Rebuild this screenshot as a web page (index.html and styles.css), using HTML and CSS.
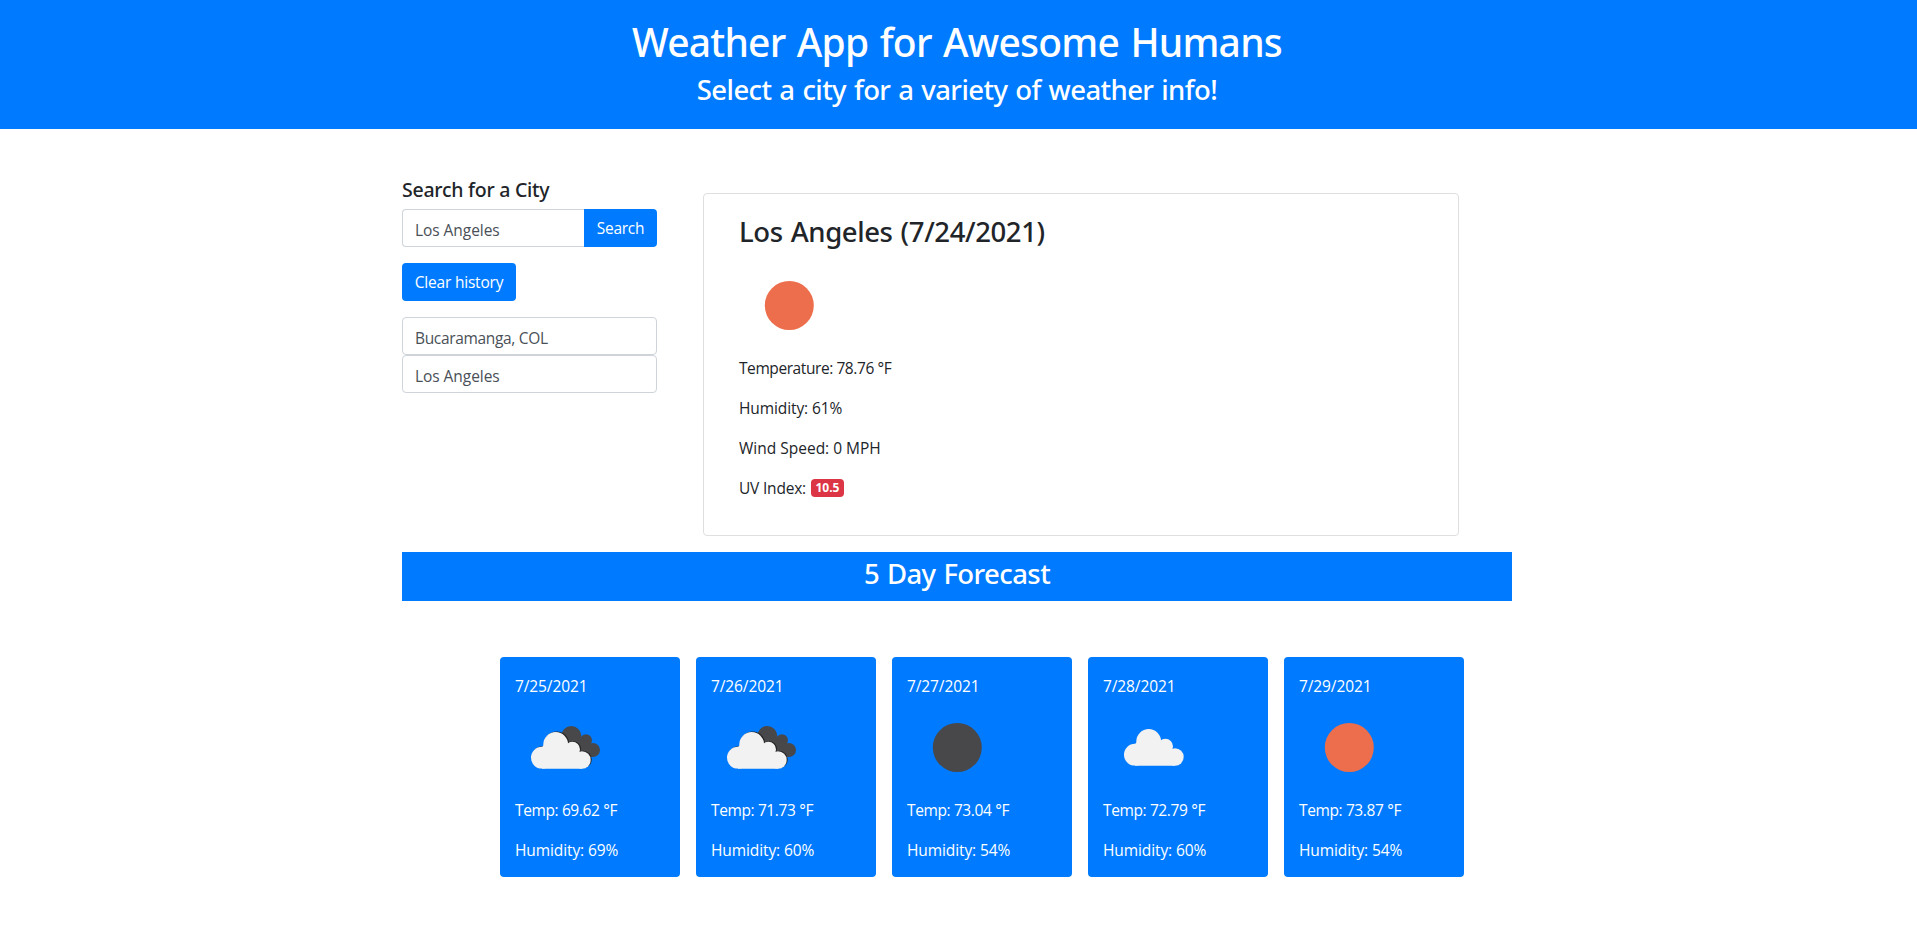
FILE: index.html
```html
<!DOCTYPE html>
<html lang="en">
<head>
<meta charset="utf-8">
<title>Weather App</title>
<link rel="stylesheet" href="styles.css">
</head>
<body>
<svg width="0" height="0" class="defs">
  <defs>
    <g id="cloud">
      <circle cx="26.9" cy="59.7" r="10.9"/>
      <circle cx="40.7" cy="46.4" r="12.4"/>
      <circle cx="57.4" cy="51.4" r="7.6"/>
      <circle cx="67" cy="62" r="8.7"/>
      <path d="M27 49 L30 46 H50 L64 54 L67 70.7 H27 Z"/>
    </g>
    <symbol id="single" viewBox="0 0 100 100">
      <use href="#cloud" x="5" y="-3" fill="#f2f2f2"/>
    </symbol>
    <symbol id="broken" viewBox="0 0 100 100">
      <g fill="#48484a">
        <circle cx="56.3" cy="38" r="10"/>
        <circle cx="71" cy="42.2" r="6"/>
        <circle cx="77.9" cy="52" r="7.1"/>
        <path d="M56 36 L66 39 L76 47 L78 59.1 H56 Z"/>
      </g>
      <use href="#cloud" fill="#222" x="1" y="-.6"/>
      <use href="#cloud" fill="#f2f2f2"/>
    </symbol>
    <symbol id="disc" viewBox="0 0 100 100">
      <circle cx="50.3" cy="49.5" r="24.5"/>
    </symbol>
  </defs>
</svg>
<header class="banner">
  <h1>Weather App for Awesome Humans</h1>
  <h3>Select a city for a variety of weather info!</h3>
</header>
<main class="container">
  <div class="top">
    <aside class="sidebar">
      <h5>Search for a City</h5>
      <div class="group">
        <div class="field"><span class="t-la">Los Angeles</span></div>
        <button class="btn btn-search">Search</button>
      </div>
      <button class="btn btn-clear">Clear history</button>
      <div class="field"><span class="t-buc">Bucaramanga, COL</span></div>
      <div class="field"><span class="t-la">Los Angeles</span></div>
    </aside>
    <section class="current">
      <h3>Los Angeles (7/24/2021)</h3>
      <svg class="icon sun"><use href="#disc"/></svg>
      <p class="t-temperature">Temperature: 78.76 °F</p>
      <p class="t-hum">Humidity: 61%</p>
      <p>Wind Speed: 0 MPH</p>
      <p class="uv"><span class="t-uv">UV Index:</span><span class="badge">10.5</span></p>
    </section>
  </div>
  <h3 class="strip">5 Day Forecast</h3>
  <div class="cards">
    <div class="card"><p class="t-date">7/25/2021</p><svg class="icon"><use href="#broken"/></svg><p class="t-temp">Temp: 69.62 °F</p><p class="t-hum">Humidity: 69%</p></div>
    <div class="card"><p class="t-date">7/26/2021</p><svg class="icon"><use href="#broken"/></svg><p class="t-temp">Temp: 71.73 °F</p><p class="t-hum">Humidity: 60%</p></div>
    <div class="card"><p class="t-date">7/27/2021</p><svg class="icon moon"><use href="#disc"/></svg><p class="t-temp">Temp: 73.04 °F</p><p class="t-hum">Humidity: 54%</p></div>
    <div class="card"><p class="t-date">7/28/2021</p><svg class="icon"><use href="#single"/></svg><p class="t-temp">Temp: 72.79 °F</p><p class="t-hum">Humidity: 60%</p></div>
    <div class="card"><p class="t-date">7/29/2021</p><svg class="icon sun"><use href="#disc"/></svg><p class="t-temp">Temp: 73.87 °F</p><p class="t-hum">Humidity: 54%</p></div>
  </div>
</main>
</body>
</html>
```
FILE: styles.css
```css
* { box-sizing: border-box; }
body {
  margin: 0;
  background: #fff;
  color: #212529;
  font: 400 15.5px/24px "Open Sans", "Noto Sans", sans-serif;
}
h1, h3, h5, p { margin: 0; white-space: nowrap; }
h1, h3, h5 { font-family: "Noto Sans", sans-serif; font-weight: 500; }
h1 { font-size: 39px; line-height: 48px; letter-spacing: -.78px; word-spacing: 2px; }
h3 { font-size: 27.5px; line-height: 34px; letter-spacing: -.58px; word-spacing: 1.3px; }
h5 { font-size: 19.5px; line-height: 24px; letter-spacing: -.25px; }
.defs { position: absolute; }
.banner {
  height: 129px;
  padding: 18px 3px 0 0;
  background: #007bff;
  color: #fff;
  text-align: center;
}
.banner h3 { margin-top: 7px; }
.container { width: 1110px; margin: 0 0 0 402px; }
.top { display: flex; padding-top: 48px; }
.sidebar { width: 255px; margin-right: 46px; }
.sidebar h5 { margin-bottom: 8px; padding-top: 1px; height: 24px; }
.group { display: flex; }
.field {
  height: 38px;
  padding: 8px 12px 6px;
  border: 1px solid #ced4da;
  border-radius: 4px;
  color: #495057;
}
.group .field { width: 182px; border-right: 0; border-radius: 4px 0 0 4px; }
.btn {
  height: 38px;
  padding: 0;
  border: 0;
  border-radius: 4px;
  background: #007bff;
  color: #fff;
  font: inherit;
}
.btn-search { width: 73px; border-radius: 0 4px 4px 0; letter-spacing: -.25px; }
.btn-clear { display: block; width: 114px; margin: 16px 0; letter-spacing: -.2px; }
.current {
  width: 756px;
  height: 343px;
  margin-top: 16px;
  padding: 21px 35px;
  border: 1px solid #dfdfdf;
  border-radius: 4px;
}
.current h3 { letter-spacing: -.4px; margin-bottom: 7px; }
.icon { display: block; width: 100px; height: 100px; }
.current p { margin-bottom: 16px; }
.sun { fill: #ec6e4c; }
.moon { fill: #48484a; }
.uv { display: flex; align-items: center; gap: 5px; }
.badge {
  width: 33px;
  height: 18px;
  border-radius: 4px;
  background: #dc3545;
  color: #fff;
  font-size: 12px;
  font-weight: 700;
  line-height: 18px;
  text-align: center;
}
.strip {
  height: 49px;
  margin-top: 16px;
  padding-top: 5px;
  background: #007bff;
  color: #fff;
  text-align: center;
}
.cards { display: flex; gap: 16px; padding: 56px 0 0 98px; }
.card {
  width: 180px;
  height: 220px;
  padding: 17px 15px 0;
  border-radius: 4px;
  background: #007bff;
  color: #fff;
}
.card .t-temp { margin-bottom: 16px; }
.t-la { letter-spacing: -.06px; }
.t-buc { letter-spacing: -.33px; }
.t-temperature { letter-spacing: -.42px; }
.t-hum { letter-spacing: -.1px; }
.t-uv { letter-spacing: -.2px; }
.t-date { letter-spacing: -.1px; }
.t-temp { letter-spacing: -.38px; }
```
